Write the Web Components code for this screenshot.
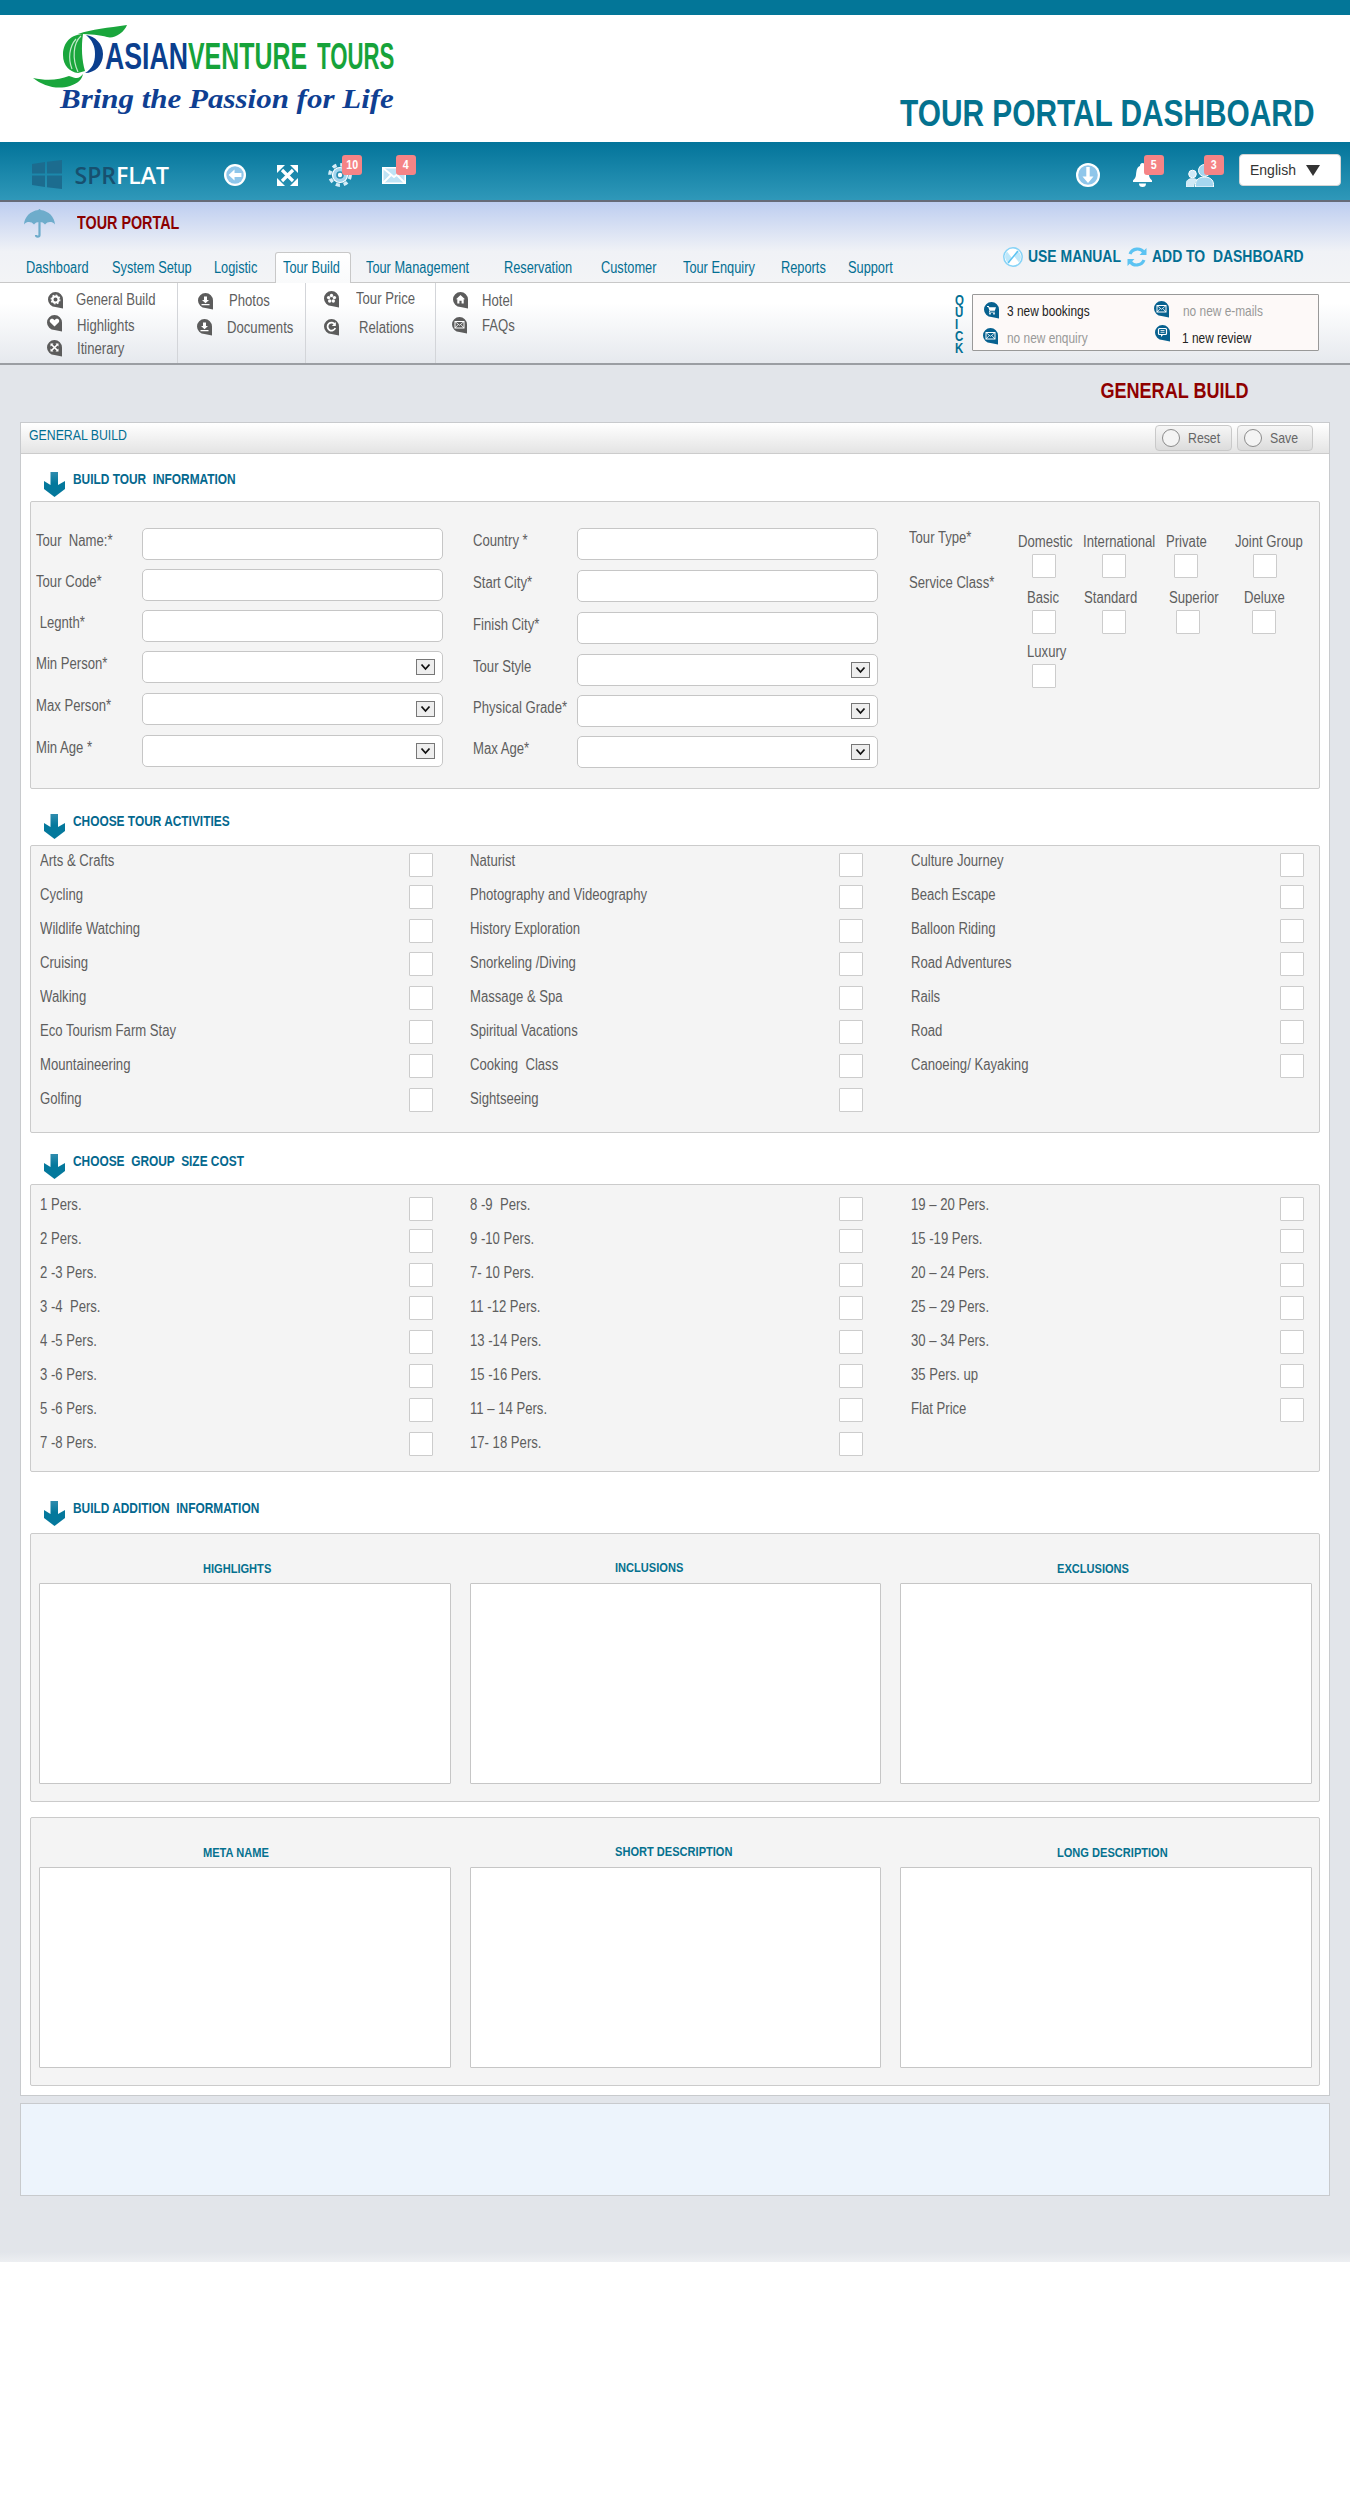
<!DOCTYPE html>
<html lang="en">
<head>
<meta charset="utf-8">
<title>Tour Portal Dashboard</title>
<style>
    html, body { margin: 0; background: #fff; }
    body {
        font-family: "Liberation Sans", Arial, sans-serif;
        color: #5e5e5e;
        height: 2500px;
        overflow: hidden;
    }
</style>
</head>
<body>
<site-header>TOUR PORTAL DASHBOARD</site-header>

<app-nav>
    <nav-icon slot="left" name="back" x="55" y="22" w="22" h="22"></nav-icon>
    <nav-icon slot="left" name="expand" x="31" y="23" w="21" h="21"></nav-icon>
    <nav-icon slot="left" name="gear" x="30" y="21" w="24" h="24" badge="10" bx="14" by="-8"></nav-icon>
    <nav-icon slot="left" name="mail" x="30" y="25" w="24" h="17" badge="4" bx="14" by="-12"></nav-icon>
    <nav-icon slot="right" name="down" x="0" y="21" w="24" h="24"></nav-icon>
    <nav-icon slot="right" name="bell" x="32" y="21" w="21" h="24" badge="5" bx="12" by="-8"></nav-icon>
    <nav-icon slot="right" name="users" x="33" y="21" w="28" h="24" badge="3" bx="18" by="-8"></nav-icon>
    <lang-box slot="right">English</lang-box>
</app-nav>

<portal-band></portal-band>

<sub-menu>
    <menu-col style="width:178px">
        <menu-item icon="gear" x="48" y="9" gap="13" dy="-1">General Build</menu-item>
        <menu-item icon="heart" x="47" y="6" gap="15" dy="2">Highlights</menu-item>
        <menu-item icon="cross" x="47" y="8" gap="15">Itinerary</menu-item>
    </menu-col>
    <menu-col style="width:128px">
        <menu-item icon="download" x="20" y="10" gap="16" dy="-1">Photos</menu-item>
        <menu-item icon="download" x="19" y="9" gap="15">Documents</menu-item>
    </menu-col>
    <menu-col style="width:130px">
        <menu-item icon="flower" x="18" y="8" gap="17" dy="-1">Tour Price</menu-item>
        <menu-item icon="refresh" x="18" y="11" gap="20">Relations</menu-item>
    </menu-col>
    <menu-col style="width:519px;border:0">
        <menu-item icon="home" x="17" y="9" gap="14">Hotel</menu-item>
        <menu-item icon="mail" x="16" y="8" gap="15">FAQs</menu-item>
    </menu-col>
    <quick-box>
        <menu-item slot="a" tone="blue" icon="cart" x="11.5" y="7" gap="8" dark>3 new bookings</menu-item>
        <menu-item slot="b" tone="blue" icon="mail" x="11.5" y="6" gap="14" dy="1">no new e-mails</menu-item>
        <menu-item slot="a" tone="blue" icon="mail" x="10.5" y="9" gap="9" dy="1">no new enquiry</menu-item>
        <menu-item slot="b" tone="blue" icon="comment" x="12.5" y="7" gap="12" dy="4" dark>1 new review</menu-item>
    </quick-box>
</sub-menu>

<content-area heading="GENERAL BUILD">
    <build-panel heading="GENERAL BUILD">
        <form-section heading="BUILD TOUR  INFORMATION" gap="18" row="29" box="288">
            <tour-info></tour-info>
        </form-section>
        <form-section heading="CHOOSE TOUR ACTIVITIES" gap="25" row="31" box="288">
            <check-grid pad="3" items='[
                ["Arts &amp; Crafts","Cycling","Wildlife Watching","Cruising","Walking","Eco Tourism Farm Stay","Mountaineering","Golfing"],
                ["Naturist","Photography and Videography","History Exploration","Snorkeling /Diving","Massage &amp; Spa","Spiritual Vacations","Cooking  Class","Sightseeing"],
                ["Culture Journey","Beach Escape","Balloon Riding","Road Adventures","Rails","Road","Canoeing/ Kayaking"]
            ]'></check-grid>
        </form-section>
        <form-section heading="CHOOSE  GROUP  SIZE COST" gap="21" row="30" box="288">
            <check-grid pad="8" items='[
                ["1 Pers.","2 Pers.","2 -3 Pers.","3 -4  Pers.","4 -5 Pers.","3 -6 Pers.","5 -6 Pers.","7 -8 Pers."],
                ["8 -9  Pers.","9 -10 Pers.","7- 10 Pers.","11 -12 Pers.","13 -14 Pers.","15 -16 Pers.","11 – 14 Pers.","17- 18 Pers."],
                ["19 – 20 Pers.","15 -19 Pers.","20 – 24 Pers.","25 – 29 Pers.","30 – 34 Pers.","35 Pers. up","Flat Price"]
            ]'></check-grid>
        </form-section>
        <form-section heading="BUILD ADDITION  INFORMATION" gap="29" row="32" box="269">
            <text-row>
                <text-column heading="HIGHLIGHTS" dx="164"></text-column>
                <text-column heading="INCLUSIONS" dx="145" up></text-column>
                <text-column heading="EXCLUSIONS" dx="157"></text-column>
            </text-row>
        </form-section>
        <form-section gap="15" row="0" box="269">
            <text-row>
                <text-column heading="META NAME" dx="164"></text-column>
                <text-column heading="SHORT DESCRIPTION" dx="145" up></text-column>
                <text-column heading="LONG DESCRIPTION" dx="157"></text-column>
            </text-row>
        </form-section>
    </build-panel>
    <note-box></note-box>
</content-area>

<script>
// shared glyphs, white on the bubble icons
const GLYPHS = {
    gear: `<circle cx="7.5" cy="7.5" r="3" fill="none" stroke="#fff" stroke-width="2"/><circle cx="7.5" cy="7.5" r="4.4" fill="none" stroke="#fff" stroke-width="1.2" stroke-dasharray="1.8 1.6"/>`,
    heart: `<path d="M7.5 11.5 3.4 7.6C2 6 3 3.7 5 3.7c1.1 0 2 .6 2.5 1.5.5-.9 1.4-1.5 2.5-1.5 2 0 3 2.3 1.6 3.9z" fill="#fff"/>`,
    cross: `<path d="M4.5 4.5l6 6M10.5 4.5l-6 6" stroke="#fff" stroke-width="1.6"/><path d="M3.5 3.5h3l-3 3zM11.5 3.5v3l-3-3zM3.5 11.5v-3l3 3zM11.5 11.5h-3l3-3z" fill="#fff"/>`,
    download: `<path d="M6 3.5h3v3.5h2L7.500 10.300 4 7h2zM3.500 11h8v1.300h-8z" fill="#fff"/>`,
    flower: `<g fill="#fff"><circle cx="7.500" cy="4.500" r="1.700"/><circle cx="10.400" cy="6.600" r="1.700"/><circle cx="9.300" cy="10" r="1.700"/><circle cx="5.700" cy="10" r="1.700"/><circle cx="4.600" cy="6.600" r="1.700"/></g>`,
    refresh: `<path d="M11 5.500A4 4 0 1 0 11.300 9" fill="none" stroke="#fff" stroke-width="1.800"/><path d="M11.800 3v4h-4z" fill="#fff"/>`,
    home: `<path d="M7.500 3 12 7.200h-1.300V11.500H8.600V8.800H6.400v2.700H4.300V7.200H3z" fill="#fff"/>`,
    mail: `<rect x="3" y="4.500" width="9" height="6.500" fill="none" stroke="#fff" stroke-width="1"/><path d="M3 4.500l4.500 3.800L12 4.500M3 11l3.200-3.400M12 11 8.800 7.600" fill="none" stroke="#fff" stroke-width=".8"/>`,
    cart: `<path d="M3 4h1.800l.6 1.300H12l-1.200 3.500H6.200l-.3.9h5v.9H4.800l.7-2L4.200 5H3z" fill="#fff"/><circle cx="6" cy="11.700" r=".9" fill="#fff"/><circle cx="10" cy="11.700" r=".9" fill="#fff"/>`,
    comment: `<rect x="3.500" y="3.500" width="8" height="6" rx="1" fill="none" stroke="#fff" stroke-width="1.200"/><path d="M6 9.500v2.500l2.500-2.500z" fill="#fff"/><path d="M5.500 5.500h4M5.500 7.300h4" stroke="#fff" stroke-width=".8"/>`,
};

const NAV_ICONS = {
    back: `<svg viewBox="0 0 24 24"><circle cx="12" cy="12" r="12" fill="#fff"/><circle cx="12" cy="12" r="9.500" fill="#8fc6ea"/><path d="M5 12l6.500-6v3.800H19v4.400h-7.500V18z" fill="#fff"/></svg>`,
    down: `<svg viewBox="0 0 24 24"><circle cx="12" cy="12" r="12" fill="#fff"/><circle cx="12" cy="12" r="9.800" fill="#8fc6ea"/><path d="M12 20l-5.500-6.500h3.800V4h3.400v9.500h3.800z" fill="#fff"/></svg>`,
    expand: `<svg viewBox="0 0 21 21"><path d="M5 5l11 11M16 5 5 16" stroke="#fff" stroke-width="3.200"/><path d="M0 0h8L0 8zM21 0v8l-8-8zM0 21v-8l8 8zM21 21h-8l8-8z" fill="#fff"/></svg>`,
    gear: `<svg viewBox="0 0 24 24"><circle cx="12" cy="12" r="10.200" fill="none" stroke="#d5ecf7" stroke-width="3.400" stroke-dasharray="4.200 3.800"/><circle cx="12" cy="12" r="7.500" fill="#a5d6ef"/><circle cx="12" cy="12" r="7.500" fill="none" stroke="#fff" stroke-width="1.200"/><circle cx="12" cy="12" r="3.800" fill="#2c8fb2"/><circle cx="12" cy="12" r="2.200" fill="#fff"/></svg>`,
    mail: `<svg viewBox="0 0 24 17"><rect width="24" height="17" fill="#fff"/><rect x="1.500" y="1.500" width="21" height="14" fill="#bfe3f5"/><path d="M1 1l11 9 11-9M1 16l8.500-8.500M23 16l-8.500-8.500" fill="none" stroke="#fff" stroke-width="1.800"/></svg>`,
    bell: `<svg viewBox="0 0 21 24"><path d="M10.500 0C8.700 0 8 1.400 8 3 4.700 4.300 4.500 7.500 4 12c-.3 2.500-1.500 4-3 5.500V19h19v-1.500c-1.500-1.500-2.700-3-3-5.500-.5-4.500-.7-7.700-4-9 0-1.600-.7-3-2.500-3z" fill="#fff"/><path d="M7 20.500h7a3.500 3.500 0 0 1-7 0z" fill="#fff"/></svg>`,
    users: `<svg viewBox="0 0 28 24"><circle cx="6.500" cy="11" r="3.800" fill="#cfe9f6" stroke="#fff"/><path d="M0 24v-3c0-3.500 2.700-5.500 6.500-5.500 1.700 0 3.200.4 4.300 1.200C9 18.500 8 21 8 24z" fill="#cfe9f6" stroke="#fff" stroke-width=".6"/><circle cx="18.500" cy="7.500" r="6" fill="#a5d6ef" stroke="#fff"/><path d="M9.500 24v-2.500c0-5 4-7.500 9-7.500s9 2.500 9 7.500V24z" fill="#a5d6ef" stroke="#fff"/></svg>`,
};

function bubble(name, tone) {
    const fill = tone === "blue" ? "#07618f" : "#5c5c5c";
    return `<svg width="15" height="17" viewBox="0 0 15 17" style="flex:none;display:block">
        <path d="M7.500 0A7.500 7.500 0 0 0 0 7.500 7.500 7.500 0 0 0 7.500 15L15 16.500V7.500A7.500 7.500 0 0 0 7.500 0z" fill="${fill}"/>${GLYPHS[name] || ""}
    </svg>`;
}

// the page was set in Arial Narrow, which isn't installed: squeeze Liberation Sans instead
const NARROW = `.n { display: inline-block; transform: scaleX(.82); transform-origin: 0 50%; white-space: pre; }
    .n.r { transform-origin: 100% 50%; }`;
const n = (text) => `<span class="n">${text}</span>`;

// little base so the elements below only say what they draw
class ShadowElement extends HTMLElement {
    constructor() {
        super();
        this.attachShadow({ mode: "open" });
    }

    connectedCallback() {
        this.shadowRoot.innerHTML = `<style>${NARROW}</style>${this.render()}`;
    }

    num(name, fallback = 0) {
        return this.hasAttribute(name) ? Number(this.getAttribute(name)) : fallback;
    }
}

class SiteHeader extends ShadowElement {
    connectedCallback() {
        super.connectedCallback();
        // logo lettering is stretched to the width it has in the artwork
        this.shadowRoot.querySelectorAll("[data-w]").forEach((el) => {
            el.style.transform = `scaleX(${Number(el.dataset.w) / el.offsetWidth})`;
        });
    }

    render() {
        return `<style>
            :host { display: block; border-top: 15px solid #037698; height: 127px; background: #fff; }
            .wrap { display: flex; justify-content: space-between; height: 100%; }
            .logo { position: relative; flex: none; width: 420px; height: 110px; }
            .logo svg { position: absolute; left: 0; top: 0; width: 420px; height: 110px; }
            .brand { display: flex; padding: 23.500px 0 0 105px; font-size: 36px; line-height: 36px; font-weight: 700; }
            .brand div { flex: none; }
            .logo span { display: inline-block; white-space: nowrap; transform-origin: 0 50%; }
            .tag {
                margin: 9px 0 0 60px; font: italic 700 28px/30px "Liberation Serif", serif; color: #0f3f92;
            }
            h1 { margin: 79px 36px 0 0; font-size: 36.400px; line-height: 40px; font-weight: 700; color: #04728f; white-space: nowrap; text-align: right; }
        </style>
        <div class="wrap">
            <div class="logo">
                <svg viewBox="0 0 420 110">
                    <path d="M33 63c14 3 26 2 36-2 8 3 10 3 14-2-1 5-4 9-13 12-13 4-27 0-37-8z" fill="#1aa63c"/>
                    <path d="M83 19C68 20 63 30 63 40c0 11 7 17 15 18l7-2c-3-10-4-24-2-37z" fill="#1aa63c"/>
                    <path d="M81 21C73 28 72 44 78 57M76 24C69 32 68 44 72 54" fill="none" stroke="#bfe8c8" stroke-width="1.200"/>
                    <path d="M86 20c9 1 17 9 17 19 0 11-8 19-18 19 7-4 10-10 10-19 0-8-3-14-9-19z" fill="#0b3f8e"/>
                    <path d="M78 19C92 14 108 13 127 10c-3 8-13 14-20 12-7-2-16-3-29-3z" fill="#1aa63c"/>
                </svg>
                <div class="brand">
                    <div style="width:83px;color:#0b3f8e"><span data-w="83">ASIAN</span></div>
                    <div style="width:129px;color:#16a33a"><span data-w="119">VENTURE</span></div>
                    <div style="width:77px;color:#16a33a"><span data-w="77">TOURS</span></div>
                </div>
                <div class="tag"><span data-w="334">Bring the Passion for Life</span></div>
            </div>
            <h1><span class="n r"><slot></slot></span></h1>
        </div>`;
    }
}

class AppNav extends ShadowElement {
    render() {
        return `<style>
            :host { display: block; height: 60px; box-sizing: border-box; background: linear-gradient(#03749a, #2f98b9); border-bottom: 2px solid #666b78; }
            .bar { display: flex; height: 58px; padding: 0 9px 0 32px; box-sizing: border-box; }
            .brand { display: flex; flex: none; width: 137px; }
            .win { display: block; width: 30px; height: 29px; margin-top: 18px; flex: none; }
            .name { margin: 20px 0 0 12.500px; font: 600 23px/26px "Open Sans", sans-serif; white-space: nowrap; }
            .name b { color: #17506f; font-weight: 600; }
            .name i { color: #fff; font-style: normal; }
            .side { display: flex; }
            .right { margin-left: auto; }
        </style>
        <div class="bar">
            <div class="brand">
                <svg class="win" viewBox="0 0 30 29"><path d="M0 4l13-2v11.500H0zM15 1.700 30 0v13.500H15zM0 15.500h13V27L0 25zM15 15.500h15V29l-15-1.800z" fill="#1c6c8f"/></svg>
                <div class="name"><b>SPR</b><i>FLAT</i></div>
            </div>
            <div class="side"><slot name="left"></slot></div>
            <div class="side right"><slot name="right"></slot></div>
        </div>`;
    }
}

class NavIcon extends ShadowElement {
    render() {
        const badge = this.getAttribute("badge");
        return `<style>
            :host {
                display: block; position: relative; flex: none;
                width: ${this.num("w")}px; height: ${this.num("h")}px;
                margin: ${this.num("y")}px 0 0 ${this.num("x")}px;
            }
            svg { display: block; width: 100%; height: 100%; }
            b {
                position: absolute; left: ${this.num("bx")}px; top: ${this.num("by")}px;
                width: 20px; height: 20px; border-radius: 3px; background: #f58486;
                color: #fff; font-size: 13px; font-weight: 700; line-height: 20px; text-align: center;
            }
            .n { transform-origin: 50% 50%; }
        </style>
        ${NAV_ICONS[this.getAttribute("name")]}
        ${badge ? `<b>${n(badge)}</b>` : ""}`;
    }
}

class LangBox extends ShadowElement {
    render() {
        return `<style>
            :host {
                display: flex; align-items: center; flex: none; box-sizing: border-box;
                width: 102px; height: 32px; margin: 12px 0 0 25px; padding: 0 0 0 10px;
                background: #fff; border: 1px solid #d5d5d5; border-radius: 4px;
                font: 14px "Liberation Sans", sans-serif; color: #333;
            }
            i { width: 0; height: 0; margin-left: 10px; border: 7.5px solid transparent; border-top: 11px solid #333; border-bottom: 0; }
        </style><slot></slot><i></i>`;
    }
}

class PortalBand extends ShadowElement {
    render() {
        // start of each tab is fixed, the widths are the distance to the next one
        const tabs = [
            ["Dashboard", 85.5], ["System Setup", 102.5], ["Logistic", 60.6], ["Tour Build", 76.4, true],
            ["Tour Management", 137.6, false, 15], ["Reservation", 97.4], ["Customer", 82], ["Tour Enquiry", 98],
            ["Reports", 67], ["Support", 60],
        ];
        return `<style>
            :host {
                display: grid; grid-template-columns: 1003px 1fr; height: 81px; box-sizing: border-box;
                border-bottom: 1px solid #c8c8c8;
                background: linear-gradient(#bdcdf0, #f0f2f6 62%, #f3f4f6);
            }
            .left { display: flex; flex-direction: column; }
            .title { display: flex; align-items: center; padding: 7px 0 0 24px; }
            .title svg { display: block; width: 31px; height: 30px; flex: none; }
            .title span { margin: -2px 0 0 21.500px; font-size: 17.500px; font-weight: 700; color: #8b0000; }
            nav { display: flex; margin-top: auto; padding-left: 26px; height: 30px; }
            a { display: block; flex: none; box-sizing: border-box; font-size: 15.600px; line-height: 31px; color: #036f93; white-space: nowrap; }
            a.on {
                height: 31px; padding-left: 7.500px; position: relative; border: 1px solid #c8c8c8; border-bottom: 0;
                border-radius: 3px 3px 0 0; background: linear-gradient(#fff, #f9fafb); line-height: 29px;
            }
            .links { display: flex; padding-top: 44px; font-size: 17px; font-weight: 700; color: #036f93; }
            .links div { display: flex; align-items: center; height: 22px; }
            .links svg { display: block; flex: none; width: 20px; height: 20px; margin-right: 5px; }
        </style>
        <div class="left">
            <div class="title">
                <svg viewBox="0 0 31 30">
                    <path d="M15.500 0c-.6 0-1 .5-1 1C6 2 .5 8 0 15.500c1.500-2 3.200-2.500 5-2.500s3.700.8 5 2.500c1.200-1.700 3-2.500 5.500-2.500s4.300.8 5.500 2.500c1.300-1.700 3.200-2.500 5-2.500s3.500.5 5 2.500C30.500 8 25 2 16.500 1c0-.5-.4-1-1-1z" fill="#6eaccb"/>
                    <path d="M15.500 13v13c0 2.200-3.500 2.200-3.500 0" fill="none" stroke="#6eaccb" stroke-width="2.200"/>
                </svg>
                ${n("TOUR PORTAL")}
            </div>
            <nav>${tabs.map(([label, width, on, ml]) => `<a class="${on ? "on" : ""}" style="width:${width}px;${ml ? `margin-left:${ml}px;` : ""}">${n(label)}</a>`).join("")}</nav>
        </div>
        <div class="links">
            <div style="width:124px"><svg viewBox="0 0 20 20"><circle cx="10" cy="10" r="9.200" fill="#fff" stroke="#86d3f7" stroke-width="1.500"/><path d="M4 4.500A8 8 0 0 0 6 16.500L9 11zM16 15.500A8 8 0 0 0 14 3.500L11 9z" fill="#bfe8fa"/><path d="M5 16 15 4" stroke="#5cc3f2" stroke-width="1.500"/></svg>${n("USE MANUAL")}</div>
            <div><svg viewBox="0 0 20 20"><path d="M3 7a8 8 0 0 1 14-1.500M17 13a8 8 0 0 1-14 1.500" fill="none" stroke="#5cc3f2" stroke-width="3.200"/><path d="M19.500 1v7h-7zM.5 19v-7h7z" fill="#5cc3f2"/></svg>${n("ADD TO  DASHBOARD")}</div>
        </div>`;
    }
}

class SubMenu extends ShadowElement {
    render() {
        return `<style>
            :host {
                display: flex; height: 82px; box-sizing: border-box;
                border-bottom: 2px solid #9b9ea3;
                background: linear-gradient(#fff 25%, #e6e9ee);
            }
        </style><slot></slot>`;
    }
}

class MenuCol extends ShadowElement {
    render() {
        return `<style>
            :host { display: block; flex: none; box-sizing: border-box; border-right: 1px solid #d3d5d9; }
        </style><slot></slot>`;
    }
}

class MenuItem extends ShadowElement {
    render() {
        const tone = this.getAttribute("tone");
        const quick = tone === "blue";
        const color = !quick ? "#5e5e5e" : this.hasAttribute("dark") ? "#222" : "#999";
        return `<style>
            :host {
                display: flex; align-items: center; height: 17px;
                margin: ${this.num("y")}px 0 0 ${this.num("x")}px;
                font-size: ${quick ? 14.5 : 16}px; color: ${color};
            }
            .n { margin-left: ${this.num("gap")}px; position: relative; top: ${this.num("dy")}px; }
        </style>${bubble(this.getAttribute("icon"), tone)}<span class="n"><slot></slot></span>`;
    }
}

class QuickBox extends ShadowElement {
    render() {
        return `<style>
            :host { display: flex; flex: none; margin: 11px 0 0 0; height: 57px; }
            .word { width: 8px; margin-right: 8.600px; font-size: 14px; line-height: 12px; font-weight: 700; color: #036f93; }
            .word .n { display: block; }
            .box {
                display: grid; grid-template-columns: 170px 1fr; width: 347px; height: 57px; box-sizing: border-box;
                border: 1px solid #999; border-radius: 1px; background: #fdf9f8;
            }
        </style>
        <div class="word">${[..."QUICK"].map(n).join("")}</div>
        <div class="box">
            <div><slot name="a"></slot></div>
            <div><slot name="b"></slot></div>
        </div>`;
    }
}

class ContentArea extends ShadowElement {
    render() {
        return `<style>
            :host {
                display: block; height: 1897px; box-sizing: border-box;
                background: linear-gradient(#e2e5ea calc(100% - 10px), #edeff2);
            }
            h2 {
                margin: 0; padding: 14px 102px 0 0; height: 57px; box-sizing: border-box; text-align: right;
                font-size: 22px; line-height: 24px; font-weight: 700; color: #8f0000;
            }
        </style>
        <h2><span class="n r">${this.getAttribute("heading")}</span></h2>
        <slot></slot>`;
    }
}

class BuildPanel extends ShadowElement {
    render() {
        return `<style>
            :host { display: block; margin: 0 20px; box-sizing: border-box; height: 1674px; border: 1px solid #c8cacd; background: #fff; }
            header {
                display: flex; align-items: flex-start; height: 31px; box-sizing: border-box;
                background: linear-gradient(#fff, #e4e4e4); border-bottom: 1px solid #ccc;
                padding: 2px 16px 0 8px;
            }
            header > span { font-size: 15px; line-height: 20px; color: #036f93; }
            .btns { display: flex; gap: 5px; margin-left: auto; }
            button {
                display: flex; align-items: center; box-sizing: border-box; width: 76.500px; height: 26px; padding: 0 0 0 6px;
                background: linear-gradient(#f6f6f6, #dcdcdc); border: 1px solid #c9c9c9; border-radius: 4px;
                font: inherit; font-size: 15px; color: #666;
            }
            button i { flex: none; width: 18px; height: 18px; margin-right: 8px; box-sizing: border-box; border: 1px solid #8b8b8b; border-radius: 50%; background: #f4f4f4; }
            button .n { margin-top: -2px; }
        </style>
        <header>
            ${n(this.getAttribute("heading"))}
            <div class="btns">
                <button type="button"><i></i>${n("Reset")}</button>
                <button type="button"><i></i>${n("Save")}</button>
            </div>
        </header>
        <slot></slot>`;
    }
}

class FormSection extends ShadowElement {
    render() {
        const heading = this.getAttribute("heading");
        return `<style>
            :host { display: block; margin: ${this.num("gap")}px 9px 0; }
            .head { display: flex; height: ${this.num("row")}px; padding-left: 14px; }
            svg { display: block; width: 21px; height: 25px; margin-right: 8px; flex: none; }
            h3 { margin: 0; font-size: 14.500px; line-height: 14px; font-weight: 700; color: #04688e; }
            .box { height: ${this.num("box")}px; box-sizing: border-box; border: 1px solid #cbcbcb; border-radius: 2px; background: #f4f4f4; }
        </style>
        ${heading ? `<div class="head">
            <svg viewBox="0 0 21 25"><defs><linearGradient id="a" x1="0" y1="0" x2="0" y2="1"><stop offset="0" stop-color="#2f8cae"/><stop offset=".45" stop-color="#04789c"/></linearGradient></defs><path d="M6.500 0H14V13L21 9V17L10.500 25 0 17V9L6.500 13z" fill="url(#a)"/></svg>
            <h3>${n(heading)}</h3>
        </div>` : ""}
        <div class="box"><slot></slot></div>`;
    }
}

class TourInfo extends ShadowElement {
    render() {
        const col1 = [
            ["Tour  Name:*", 0], ["Tour Code*", 9], ["\u00a0Legnth*", 9],
            ["Min Person*", 9, true], ["Max Person*", 10, true], ["Min Age *", 10, true],
        ];
        const col2 = [
            ["Country *", 0], ["Start City*", 10], ["Finish City*", 10],
            ["Tour Style", 10, true], ["Physical Grade*", 9, true], ["Max Age*", 9, true],
        ];
        const fields = (rows, width) => rows.map(([label, gap, select]) =>
            `<form-field label="${label}" width="${width}" style="margin-top:${gap}px" ${select ? "select" : ""}></form-field>`).join("");
        return `<style>
            :host { display: grid; grid-template-columns: 437px 436px 1fr; padding: 26px 0 0 5px; }
            .kind { display: grid; grid-template-columns: 109px 1fr; }
            .side div { font-size: 16px; line-height: 20px; }
            .side div + div { margin-top: 25px; }
            .opts { padding-top: 4px; }
            .line { display: grid; grid-template-columns: 65px 83px 69px 1fr; }
        </style>
        <div>${fields(col1, 106)}</div>
        <div>${fields(col2, 104)}</div>
        <div class="kind">
            <div class="side"><div>${n("Tour Type*")}</div><div>${n("Service Class*")}</div></div>
            <div class="opts">
                <div class="line">
                    <option-check label="Domestic" bx="14"></option-check>
                    <option-check label="International" bx="19"></option-check>
                    <option-check label="Private" bx="8"></option-check>
                    <option-check label="Joint Group" bx="18"></option-check>
                </div>
                <div class="line" style="margin-top:10px">
                    <option-check label="Basic" tx="9" bx="14"></option-check>
                    <option-check label="Standard" tx="1" bx="19"></option-check>
                    <option-check label="Superior" tx="3" bx="10"></option-check>
                    <option-check label="Deluxe" tx="9" bx="17"></option-check>
                </div>
                <div class="line" style="margin-top:8px">
                    <option-check label="Luxury" tx="9" bx="14"></option-check>
                </div>
            </div>
        </div>`;
    }
}

class FormField extends ShadowElement {
    render() {
        const select = this.hasAttribute("select");
        return `<style>
            :host { display: flex; height: 32px; }
            label { flex: none; width: ${this.num("width")}px; font-size: 16px; line-height: 26px; }
            .ctl { position: relative; width: 300.500px; height: 32px; }
            input, select {
                display: block; width: 100%; height: 100%; box-sizing: border-box; margin: 0; padding: 0 8px;
                appearance: none; background: #fff; border: 1px solid #c6c6c6; border-radius: 5px; outline: none;
            }
            .drop {
                position: absolute; right: 8px; top: 8px; width: 19px; height: 16px; box-sizing: border-box;
                border: 1px solid #777; background: #eee;
            }
            .drop svg { display: block; width: 100%; height: 100%; }
        </style>
        <label>${n(this.getAttribute("label"))}</label>
        <div class="ctl">
            ${select ? `<select></select><span class="drop"><svg viewBox="0 0 17 14"><path d="M4.500 4.500 8.500 9l4-4.500" fill="none" stroke="#111" stroke-width="1.800"/></svg></span>` : `<input type="text">`}
        </div>`;
    }
}

class OptionCheck extends ShadowElement {
    render() {
        return `<style>
            :host { display: block; }
            div { height: 20px; margin: 0 0 2px ${this.num("tx")}px; font-size: 16px; line-height: 20px; }
            input {
                display: block; width: 24px; height: 24px; box-sizing: border-box; margin: 0 0 0 ${this.num("bx")}px;
                appearance: none; background: #fff; border: 1px solid #ccc; border-radius: 1px;
            }
        </style>
        <div>${n(this.getAttribute("label"))}</div>
        <input type="checkbox">`;
    }
}

class CheckGrid extends ShadowElement {
    get items() {
        try {
            return JSON.parse(this.getAttribute("items") || "[]");
        } catch {
            return [];
        }
    }

    render() {
        // rows are even, the boxes of the first rows sit a little lower
        const offset = (i) => (i === 0 ? 4 : i < 3 ? 2 : 1);
        return `<style>
            :host { display: grid; grid-template-columns: 430px 441px 1fr; padding: ${this.num("pad")}px 0 0 9px; }
            .row { display: grid; grid-template-columns: 369px 24px; height: 34px; }
            .row > div { font-size: 16px; line-height: 24px; }
            input {
                display: block; width: 24px; height: 24px; box-sizing: border-box; margin: 0;
                appearance: none; background: #fff; border: 1px solid #ccc; border-radius: 1px;
            }
        </style>
        ${this.items.map((col) => `<div>${col.map((label, i) => `<div class="row"><div>${n(label)}</div><input type="checkbox" style="margin-top:${offset(i)}px"></div>`).join("")}</div>`).join("")}`;
    }
}

class TextRow extends ShadowElement {
    render() {
        return `<style>
            :host { display: grid; grid-template-columns: repeat(3, 411.500px); column-gap: 19px; padding: 25px 0 0 8px; }
        </style><slot></slot>`;
    }
}

class TextColumn extends ShadowElement {
    render() {
        const up = this.hasAttribute("up") ? 1 : 0;
        return `<style>
            :host { display: block; }
            h4 {
                margin: ${-up}px 0 ${4 + up}px ${this.num("dx")}px; font-size: 13.500px; line-height: 20px;
                font-weight: 700; color: #05718f;
            }
            textarea {
                display: block; width: 100%; height: 201px; box-sizing: border-box; margin: 0; resize: none;
                background: #fff; border: 1px solid #c6c6c6; border-radius: 1px; outline: none;
            }
        </style>
        <h4>${n(this.getAttribute("heading"))}</h4>
        <textarea></textarea>`;
    }
}

class NoteBox extends ShadowElement {
    render() {
        return `<style>
            :host { display: block; margin: 7px 20px 0; height: 93px; box-sizing: border-box; border: 1px solid #c8cacd; background: #edf4fc; }
        </style>`;
    }
}

const elements = {
    "site-header": SiteHeader, "app-nav": AppNav, "nav-icon": NavIcon, "lang-box": LangBox,
    "portal-band": PortalBand, "sub-menu": SubMenu, "menu-col": MenuCol, "menu-item": MenuItem,
    "quick-box": QuickBox, "content-area": ContentArea, "build-panel": BuildPanel,
    "form-section": FormSection, "tour-info": TourInfo, "form-field": FormField,
    "option-check": OptionCheck, "check-grid": CheckGrid, "text-row": TextRow,
    "text-column": TextColumn, "note-box": NoteBox,
};
Object.entries(elements).forEach(([name, cls]) => customElements.define(name, cls));
</script>
</body>
</html>
